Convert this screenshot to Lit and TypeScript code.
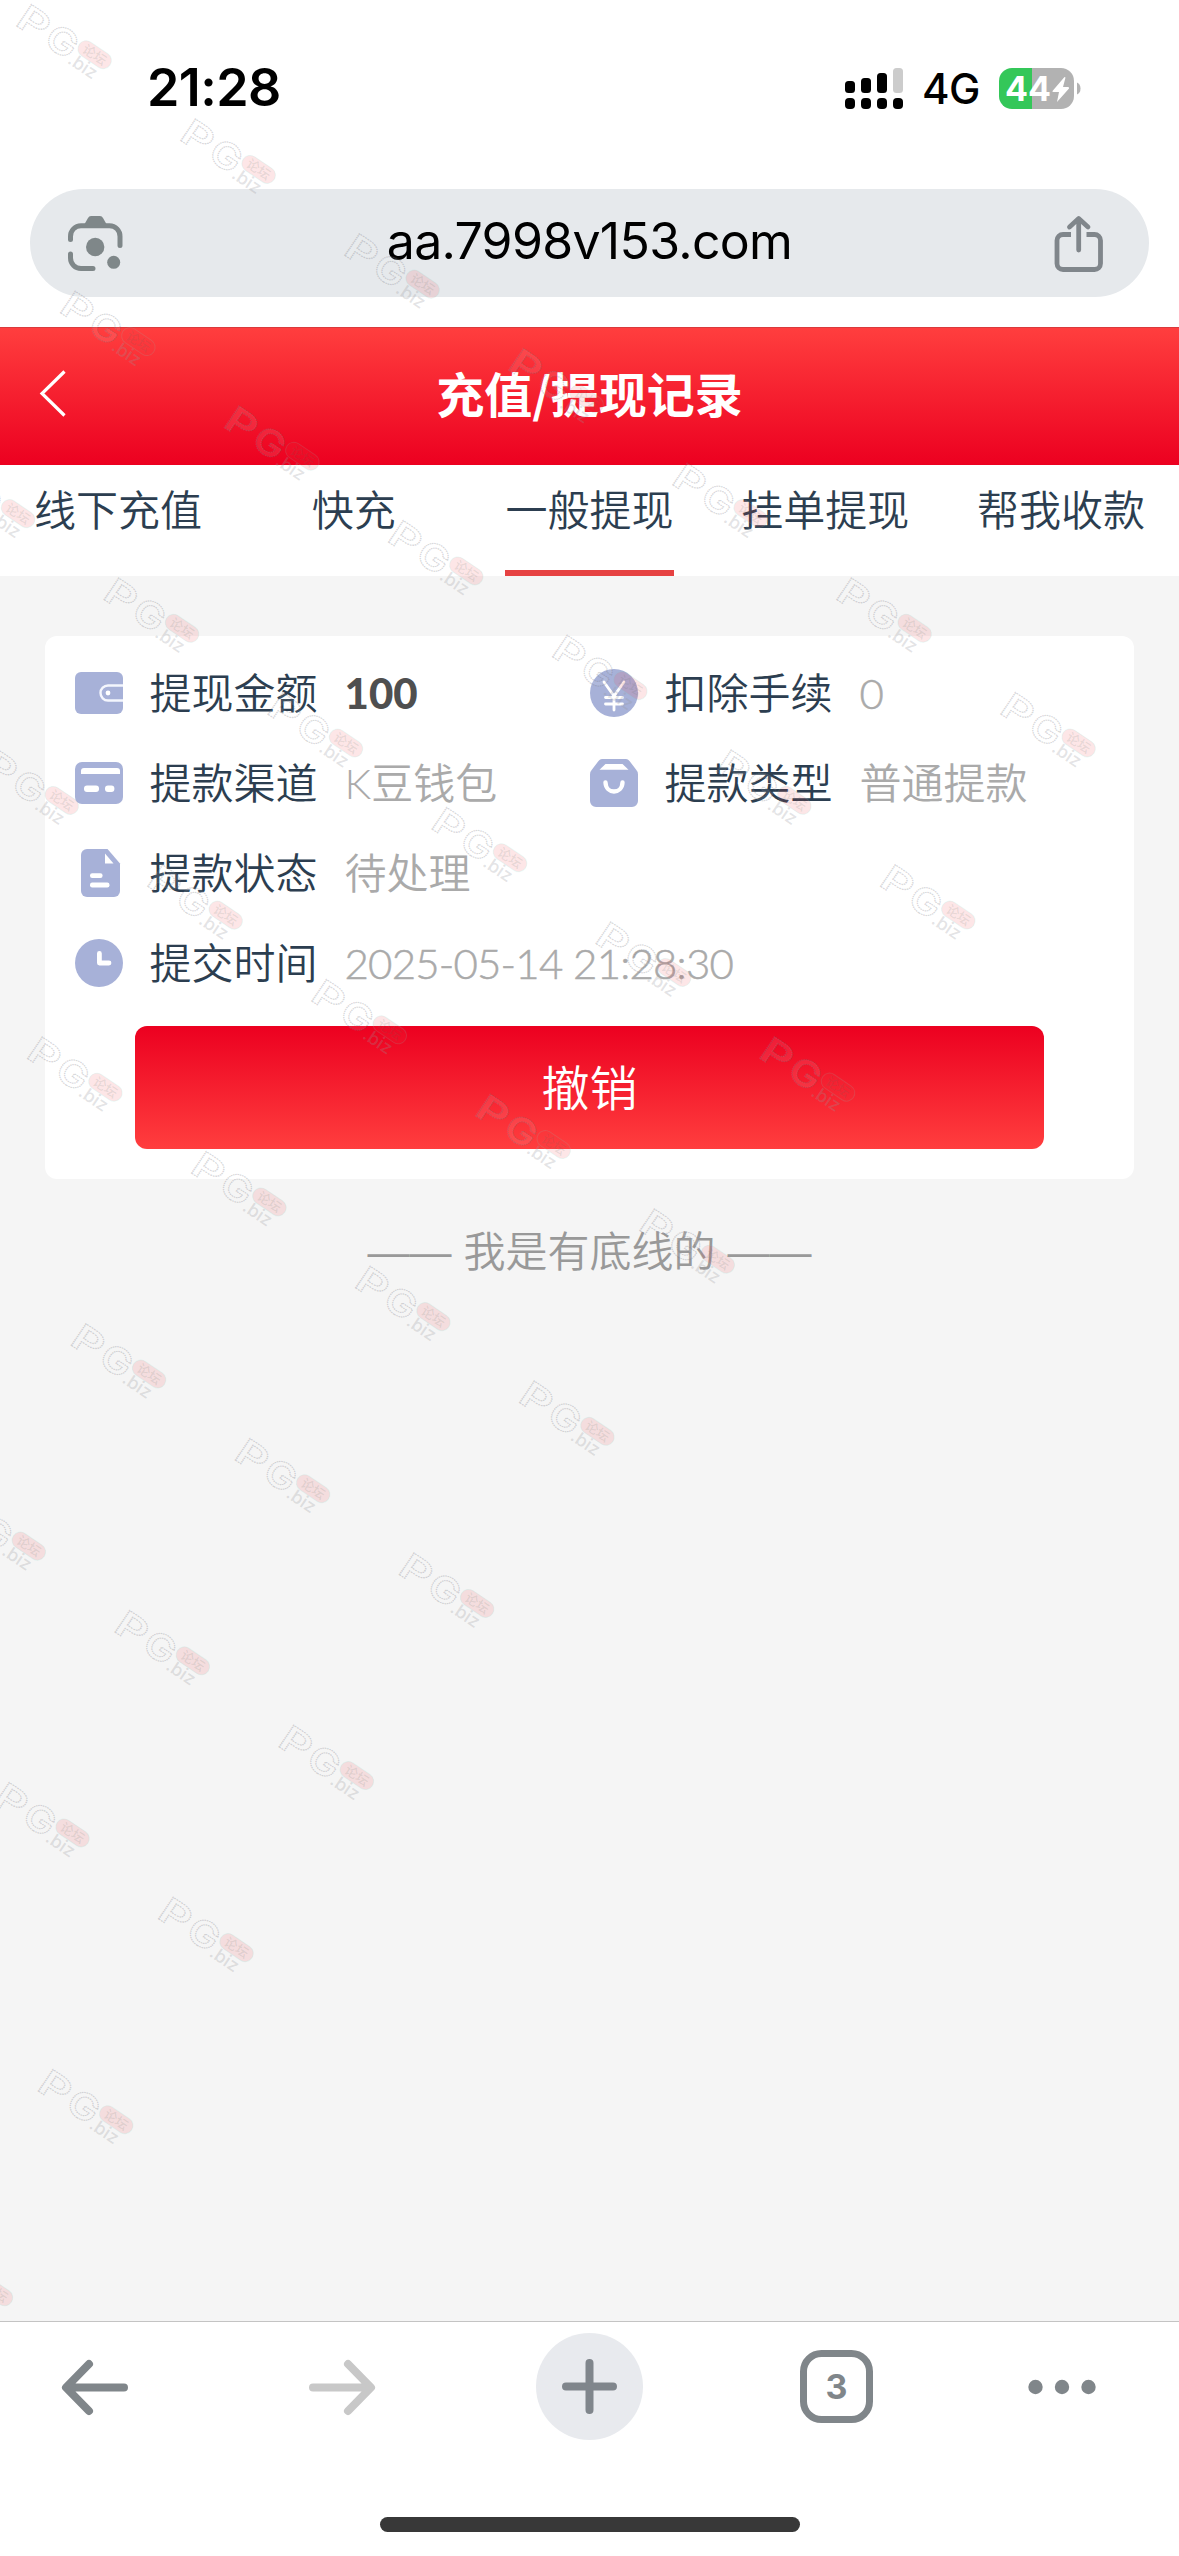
import { LitElement, html, css, svg } from "lit";
import { customElement, property } from "lit/decorators.js";

const TINT = "#a7b1d8";

const icons: Record<string, unknown> = {
  wallet: svg`<rect x="0" y="3" width="48" height="42" rx="6" fill="${TINT}"/>
    <path d="M48 16.5H33a7.5 7.5 0 0 0 0 15H48" fill="none" stroke="#f4f6fd" stroke-width="2.4"/>
    <circle cx="33" cy="24" r="2.4" fill="#fff"/>`,
  card: svg`<rect x="0" y="3" width="48" height="42" rx="7" fill="${TINT}"/>
    <path d="M6 15v-3q0-3 3-3h33q3 0 3 3v3z" fill="#fff"/>
    <rect x="9" y="26.5" width="15" height="6.4" rx="3" fill="#fff"/>
    <rect x="30" y="26.5" width="9.4" height="6.4" rx="3" fill="#fff"/>`,
  doc: svg`<path d="M12 0H32.5L45 14.5V42a6 6 0 0 1-6 6H12a6 6 0 0 1-6-6V6a6 6 0 0 1 6-6z" fill="${TINT}"/>
    <path d="M30 4.5V14.5H38.5z" fill="#fff"/>
    <rect x="15" y="24.2" width="12.6" height="4.8" rx="2.2" fill="#fff"/>
    <rect x="15" y="33.6" width="19.5" height="4.8" rx="2.2" fill="#fff"/>`,
  clock: svg`<circle cx="24" cy="24" r="24" fill="${TINT}"/>
    <path d="M24.4 14.5V24H34" fill="none" stroke="#fff" stroke-width="4.8" stroke-linecap="round" stroke-linejoin="round"/>`,
  yen: svg`<circle cx="24" cy="24" r="24" fill="${TINT}"/>
    <path d="M14 13L24 27L34 13M24 27V41M15.500 28.5H32.500M15.500 35H32.500" fill="none" stroke="#fff" stroke-width="2.8" stroke-linecap="round"/>`,
  bag: svg`<path d="M12 0H36q2 0 3.5 2L46 10.5q2 2 2 5V42a6 6 0 0 1-6 6H6a6 6 0 0 1-6-6V15.500q0-3 2-5L8.500 2Q10 0 12 0z" fill="${TINT}"/>
    <path d="M15.500 5H32.500L38.500 10.800H9.500z" fill="#fff"/>
    <path d="M15.500 23.500C16 35.500 32 35.500 32.500 23.500" fill="none" stroke="#fff" stroke-width="4.400" stroke-linecap="round"/>`,
};

@customElement("info-field")
class InfoField extends LitElement {
  @property() icon = "";
  @property() label = "";
  @property() value = "";
  @property({ type: Boolean }) strong = false;

  static styles = css`
    :host { display: flex; align-items: center; height: 90px; font-size: 42px; line-height: 60px; white-space: nowrap; }
    .icon { width: 48px; height: 48px; flex: none; display: block; }
    .label { margin-left: 26.5px; color: #2c3e50; font-weight: 350; }
    .value { margin-left: 27px; color: #aaa; font-weight: 350; }
    .latin { font-weight: 300; letter-spacing: -0.8px; -webkit-text-stroke: 0.5px #aaa; }
    .strong { color: #4f4f4f; font-weight: 900; letter-spacing: 0; -webkit-text-stroke: 0; }
  `;

  render() {
    const latin = /^[\x20-\x7e]+$/.test(this.value);
    return html`
      <svg class="icon" viewBox="0 0 48 48">${icons[this.icon]}</svg>
      <span class="label">${this.label}</span>
      <span class="value ${latin ? "latin" : ""} ${this.strong ? "strong" : ""}">${this.value}</span>
    `;
  }
}

/* Rows of the diagonal watermark: [row, first step, last step] */
const MARK_ROWS = [
  [0, 0, 6], [1, 0, 5], [2, -1, 4], [3, -1, 3], [4, -1, 2],
  [5, -1, 1], [6, -2, 0], [7, -2, -1], [8, -2, -2], [9, -3, -3],
];

@customElement("water-mark")
class WaterMark extends LitElement {
  static styles = css`
    :host { display: block; }
    .layer { display: block; width: 1179px; height: 2556px; }
    .letters { font: 600 36px Inter, sans-serif; fill: rgba(255, 255, 255, 0.1); stroke: rgba(120, 120, 130, 0.3); stroke-width: 1.2px; stroke-dasharray: 1.4 0.7; }
    .biz { font: 500 18px Inter, sans-serif; fill: rgba(150, 150, 155, 0.27); }
    .pill { fill: rgba(240, 60, 70, 0.13); stroke: rgba(120, 225, 215, 0.14); stroke-width: 1px; }
    .forum { font: 500 13px "Noto Sans CJK SC", sans-serif; fill: rgba(90, 110, 100, 0.14); }
  `;

  render() {
    const spots = MARK_ROWS.flatMap(([row, from, to]) =>
      Array.from({ length: to - from + 1 }, (_, i) => {
        const k = from + i;
        return [16 + 43.7 * row + 164 * k, 5 + 286.8 * row + 114.700 * k];
      })
    );
    return html`<svg class="layer" viewBox="0 0 1179 2556">
      ${spots.map(([x, y]) => svg`<g transform="translate(${x} ${y}) rotate(34)">
        <text class="letters" x="9" y="17" textLength="31" lengthAdjust="spacingAndGlyphs">P</text>
        <text class="letters" x="43" y="17" textLength="31" lengthAdjust="spacingAndGlyphs">G</text>
        <rect class="pill" x="74.500" y="-11" width="37" height="16.500" rx="8.200"/>
        <text class="forum" x="80" y="2">论坛</text>
        <text class="biz" x="74" y="19.500">.biz</text>
      </g>`)}
    </svg>`;
  }
}

@customElement("app-root")
class AppRoot extends LitElement {
  static styles = css`
    :host { display: flex; flex-direction: column; position: relative; width: 1179px; height: 2556px; overflow: hidden; background: #f5f5f5; font-family: Lato, "Noto Sans CJK SC", sans-serif; }
    svg { display: block; flex: none; }
    .status { height: 189px; box-sizing: border-box; padding: 58px 98px 71px 147px; display: flex; align-items: center; background: #fff; font-family: Inter, sans-serif; color: #000; }
    .time { flex: 1; font-size: 52px; font-weight: 600; letter-spacing: -0.6px; line-height: 60px; }
    .net { margin: 0 19px 0 19px; font-size: 42px; font-weight: 500; line-height: 60px; letter-spacing: -0.5px; padding-top: 2px; }
    .bat { font: 700 34px Inter, sans-serif; fill: #fff; }
    .address { background: #fff; padding: 0 30px 30px; }
    .bar { height: 108px; border-radius: 54px; background: #e6e9ec; display: flex; align-items: center; justify-content: space-between; padding: 0 43px 0 36px; font-family: Inter, sans-serif; font-size: 50px; line-height: 60px; color: #000; }
    .url { letter-spacing: -0.7px; margin-top: -4px; padding-left: 3px; }
    .head { height: 138px; box-sizing: border-box; border-top: 1px solid #d93a3c; background: linear-gradient(#ff3e3e, #ec0020); display: grid; grid-template-columns: 120px 1fr 120px; align-items: center; padding-bottom: 5px; }
    .chev { margin-left: 38px; }
    .title { text-align: center; color: #fff; font-size: 48px; line-height: 60px; font-weight: 700; font-family: "Noto Sans CJK SC", sans-serif; margin-top: -5px; }
    .tabs { height: 111px; display: grid; grid-template-columns: repeat(5, 1fr); justify-items: center; background: #fff; color: #2c3e50; font-size: 42px; font-weight: 350; white-space: nowrap; }
    .tab { box-sizing: border-box; height: 111px; line-height: 60px; padding-top: 15px; }
    .on { border-bottom: 6px solid #e64242; }
    .body { flex: 1; padding: 60px 45px 0; }
    .card { background: #fff; border-radius: 12px; padding: 12px 30px 30px; height: 543px; box-sizing: border-box; }
    .fields { display: grid; grid-template-columns: 515px 1fr; }
    .wide { grid-column: 1 / 3; }
    .undo { margin: 18px 60px 0; height: 123px; border-radius: 12px; background: linear-gradient(#ec0020, #ff3e3e); color: #fff; font-size: 48px; font-weight: 350; display: flex; align-items: center; justify-content: center; line-height: 58px; }
    .end { margin-top: 42px; display: flex; justify-content: center; gap: 12px; color: #999; font-size: 42px; font-weight: 350; line-height: 56px; font-family: "Noto Sans CJK SC", sans-serif; }
    .dash { font-family: "Liberation Sans", sans-serif; font-weight: 400; line-height: 62px; }
    .tools { height: 235px; box-sizing: border-box; border-top: 1px solid #c4c4c4; background: #fff; display: flex; flex-direction: column; align-items: center; padding-top: 11px; }
    .row { width: 1179px; height: 107px; display: grid; grid-template-columns: 190px 304px 191px 302px 149px; align-items: center; justify-items: center; }
    .num { font: 700 34px Inter, sans-serif; fill: #80868a; text-anchor: middle; }
    .home { width: 420px; height: 15px; border-radius: 8px; background: #383838; margin-top: 77px; }
    .marks { position: absolute; left: 0; top: 0; pointer-events: none; }
  `;

  tabs = ["线下充值", "快充", "一般提现", "挂单提现", "帮我收款"];

  render() {
    return html`
      <div class="status">
        <span class="time">21:28</span>
        <svg width="58" height="41" viewBox="0 0 58 41">
          <rect x="0" y="13" width="10" height="12" rx="3.500"/>
          <rect x="16" y="10" width="10" height="15" rx="3.500"/>
          <rect x="32" y="5" width="10" height="20" rx="3.500"/>
          <rect x="48" y="0" width="10" height="25" rx="3.500" fill="#ccc"/>
          ${[0, 16, 32, 48].map((x) => svg`<rect x="${x}" y="30" width="10" height="11" rx="4"/>`)}
        </svg>
        <span class="net">4G</span>
        <svg width="82" height="41" viewBox="0 0 82 41">
          <path d="M33 0H13A13 13 0 0 0 0 13V28A13 13 0 0 0 13 41H33z" fill="#34c759"/>
          <path d="M33 0H62A13 13 0 0 1 75 13V28A13 13 0 0 1 62 41H33z" fill="#b2b2b2"/>
          <path d="M78 14.500Q81.500 16 81.500 20.500T78 26.500z" fill="#b2b2b2"/>
          <text class="bat" x="6" y="33" textLength="46" lengthAdjust="spacingAndGlyphs">44</text>
          <path d="M65.500 9L53.500 23Q53 24 54.500 24H60L58 34L70 20.500Q70.500 19 69 19H64L66.500 9.500z" fill="#fff"/>
        </svg>
      </div>

      <div class="address">
        <div class="bar">
          <svg width="58" height="58" viewBox="66 213 58 58">
            <g fill="none" stroke="#7f8789" stroke-width="5" stroke-linecap="round">
              <path d="M70.500 238.500V235.500A10.500 10.500 0 0 1 81 224.700H109.500A10.500 10.500 0 0 1 120 235.500V244.500"/>
              <path d="M70.500 253V257A10.500 10.500 0 0 0 81 267.500H93"/>
            </g>
            <path d="M84 224L88 217Q89 215 91 215H100Q102 215 103 217L107 224z" fill="#7f8789"/>
            <circle cx="95.200" cy="246" r="9.200" fill="#7f8789"/>
            <circle cx="113.700" cy="261.300" r="6.500" fill="#7f8789"/>
          </svg>
          <span class="url">aa.7998v153.com</span>
          <svg width="54" height="58" viewBox="1052 214 54 58">
            <g fill="none" stroke="#80868b" stroke-width="4.800">
              <path d="M1071 234.500H1063A6 6 0 0 0 1057 240.500V263.500A6 6 0 0 0 1063 269.500H1094.500A6 6 0 0 0 1100.500 263.500V240.500A6 6 0 0 0 1094.500 234.500H1086.500"/>
              <path d="M1078.700 219V250M1069.500 227L1078.700 218.500L1088 227" stroke-linecap="round" stroke-linejoin="round"/>
            </g>
          </svg>
        </div>
      </div>

      <div class="head">
        <svg class="chev" width="30" height="50" viewBox="0 0 30 50">
          <path d="M26.500 2.500L4 24.500L26.500 46.500" fill="none" stroke="#fff" stroke-width="3.200"/>
        </svg>
        <div class="title">充值/提现记录</div>
      </div>

      <div class="tabs">
        ${this.tabs.map((t, i) => html`<div class="tab ${i === 2 ? "on" : ""}">${t}</div>`)}
      </div>

      <div class="body">
        <div class="card">
          <div class="fields">
            <info-field icon="wallet" label="提现金额" value="100" strong></info-field>
            <info-field icon="yen" label="扣除手续" value="0"></info-field>
            <info-field icon="card" label="提款渠道" value="K豆钱包"></info-field>
            <info-field icon="bag" label="提款类型" value="普通提款"></info-field>
            <info-field class="wide" icon="doc" label="提款状态" value="待处理"></info-field>
            <info-field class="wide" icon="clock" label="提交时间" value="2025-05-14 21:28:30"></info-field>
          </div>
          <div class="undo">撤销</div>
        </div>
        <div class="end"><span class="dash">——</span><span>我是有底线的</span><span class="dash">——</span></div>
      </div>

      <div class="tools">
        <div class="row">
          <svg width="68" height="60" viewBox="0 0 68 60">
            <path d="M63 30.500H6M28 7L5 30.500L28 54" fill="none" stroke="#80868a" stroke-width="8" stroke-linecap="round" stroke-linejoin="round"/>
          </svg>
          <svg width="68" height="60" viewBox="0 0 68 60">
            <path d="M5 30.500H62M40 7L63 30.500L40 54" fill="none" stroke="#c8c8c8" stroke-width="8" stroke-linecap="round" stroke-linejoin="round"/>
          </svg>
          <svg width="107" height="107" viewBox="0 0 107 107">
            <circle cx="53.500" cy="53.500" r="53.500" fill="#e8eaee"/>
            <path d="M30 53.500H77M53.500 30V77" stroke="#80868c" stroke-width="8" stroke-linecap="round"/>
          </svg>
          <svg width="73" height="73" viewBox="0 0 73 73">
            <rect x="3.500" y="3.500" width="66" height="66" rx="18" fill="none" stroke="#80868a" stroke-width="7"/>
            <text class="num" x="36.500" y="49">3</text>
          </svg>
          <svg width="68" height="16" viewBox="0 0 68 16">
            ${[7.5, 34, 60.5].map((x) => svg`<circle cx="${x}" cy="8" r="7.200" fill="#80868a"/>`)}
          </svg>
        </div>
        <div class="home"></div>
      </div>

      <water-mark class="marks"></water-mark>
    `;
  }
}
